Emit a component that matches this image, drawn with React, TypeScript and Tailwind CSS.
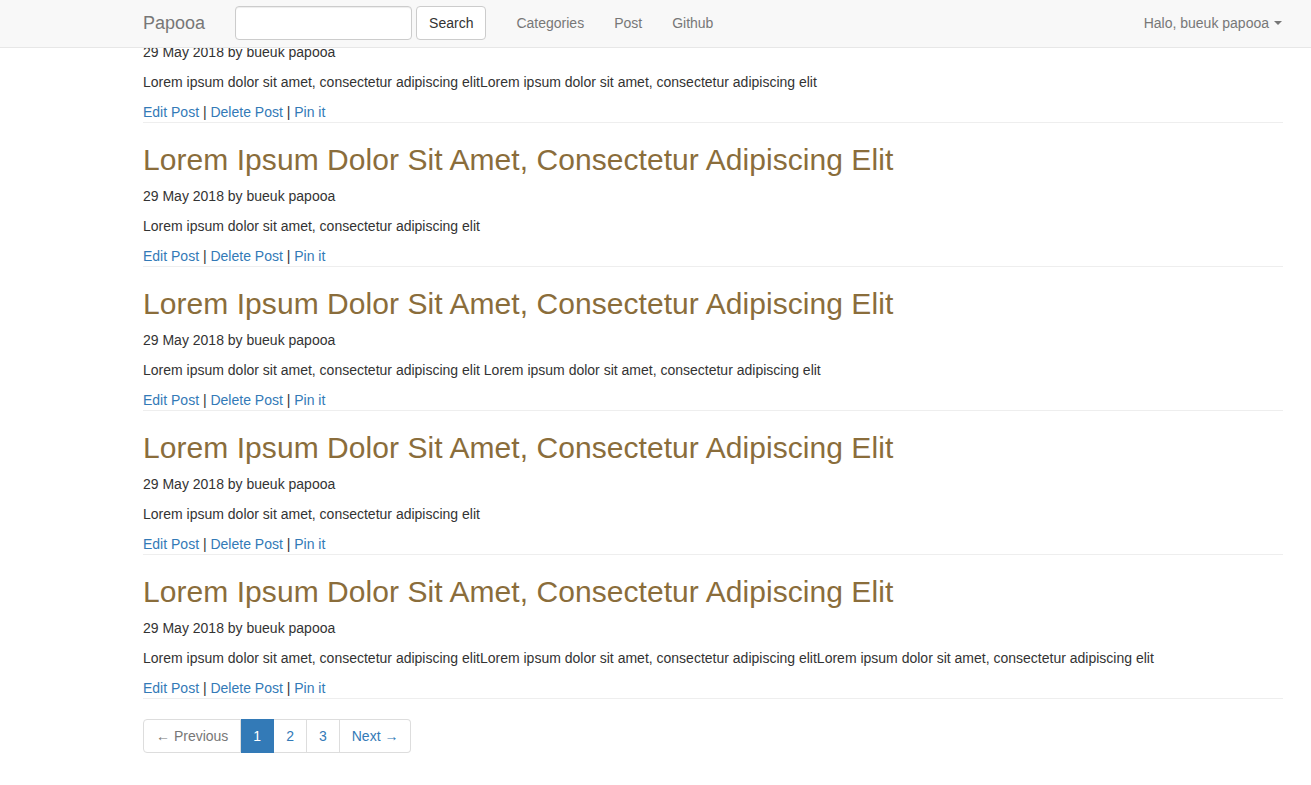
import React from "react";

const posts = [
  "Lorem ipsum dolor sit amet, consectetur adipiscing elitLorem ipsum dolor sit amet, consectetur adipiscing elit",
  "Lorem ipsum dolor sit amet, consectetur adipiscing elit",
  "Lorem ipsum dolor sit amet, consectetur adipiscing elit Lorem ipsum dolor sit amet, consectetur adipiscing elit",
  "Lorem ipsum dolor sit amet, consectetur adipiscing elit",
  "Lorem ipsum dolor sit amet, consectetur adipiscing elitLorem ipsum dolor sit amet, consectetur adipiscing elitLorem ipsum dolor sit amet, consectetur adipiscing elit",
];

function Post({ body }: { body: string }) {
  return (
    <div className="flex flex-col border-b border-[#eee]">
      <h2 className="mt-[20px] mb-[10px] text-[30px] leading-[33px] tracking-[0.06px] text-[#8a6d3b] font-normal">
        Lorem Ipsum Dolor Sit Amet, Consectetur Adipiscing Elit
      </h2>
      <p className="mb-[10px] leading-[20px]">29 May 2018 by bueuk papooa</p>
      <p className="mb-[10px] leading-[20px]">{body}</p>
      <div className="leading-[20px]">
        <a className="text-[#337ab7]">Edit Post</a> | <a className="text-[#337ab7]">Delete Post</a> |{" "}
        <a className="text-[#337ab7]">Pin it</a>
      </div>
    </div>
  );
}

export default function App() {
  return (
    <div className="min-h-[785px] bg-white text-[14px] text-[#333] font-['Liberation_Sans',Arial,sans-serif]">
      <nav className="fixed top-0 left-0 right-0 z-10 h-[48px] pb-[2px] bg-[#f8f8f8] border-b border-[#e7e7e7] flex items-center pl-[143px] pr-[29px]">
        <span className="text-[18px] text-[#777] leading-[20px]">Papooa</span>
        <div className="ml-[30px] flex items-center gap-[4px]">
          <input className="w-[177px] h-[34px] bg-white border border-[#ccc] rounded-[4px] px-[12px] shadow-[inset_0_1px_1px_rgba(0,0,0,0.075)] outline-none" />
          <button className="h-[34px] px-[12px] bg-white border border-[#ccc] rounded-[4px] text-[#333] leading-[20px]">
            Search
          </button>
        </div>
        <div className="ml-[15px] flex text-[#777] leading-[20px]">
          <a className="px-[15px]">Categories</a>
          <a className="px-[15px]">Post</a>
          <a className="px-[15px]">Github</a>
        </div>
        <div className="ml-auto flex items-center text-[#777] leading-[20px]">
          <span>Halo, bueuk papooa</span>
          <span className="ml-[5px] w-0 h-0 border-l-[4px] border-r-[4px] border-t-[4px] border-l-transparent border-r-transparent border-t-[#777]" />
        </div>
      </nav>
      <main className="-mt-[21px] pl-[143px] pr-[28px] flex flex-col">
        {posts.map((b, i) => (
          <Post key={i} body={b} />
        ))}
        <div className="mt-[20px] flex leading-[20px]">
          <span className="px-[12px] py-[6px] border border-[#ddd] rounded-l-[4px] text-[#777]">← Previous</span>
          <span className="px-[12px] py-[6px] border-y border-r border-[#337ab7] bg-[#337ab7] text-white">1</span>
          <span className="px-[12px] py-[6px] border-y border-r border-[#ddd] text-[#337ab7]">2</span>
          <span className="px-[12px] py-[6px] border-y border-r border-[#ddd] text-[#337ab7]">3</span>
          <span className="px-[12px] py-[6px] border-y border-r border-[#ddd] rounded-r-[4px] text-[#337ab7]">Next →</span>
        </div>
      </main>
    </div>
  );
}
